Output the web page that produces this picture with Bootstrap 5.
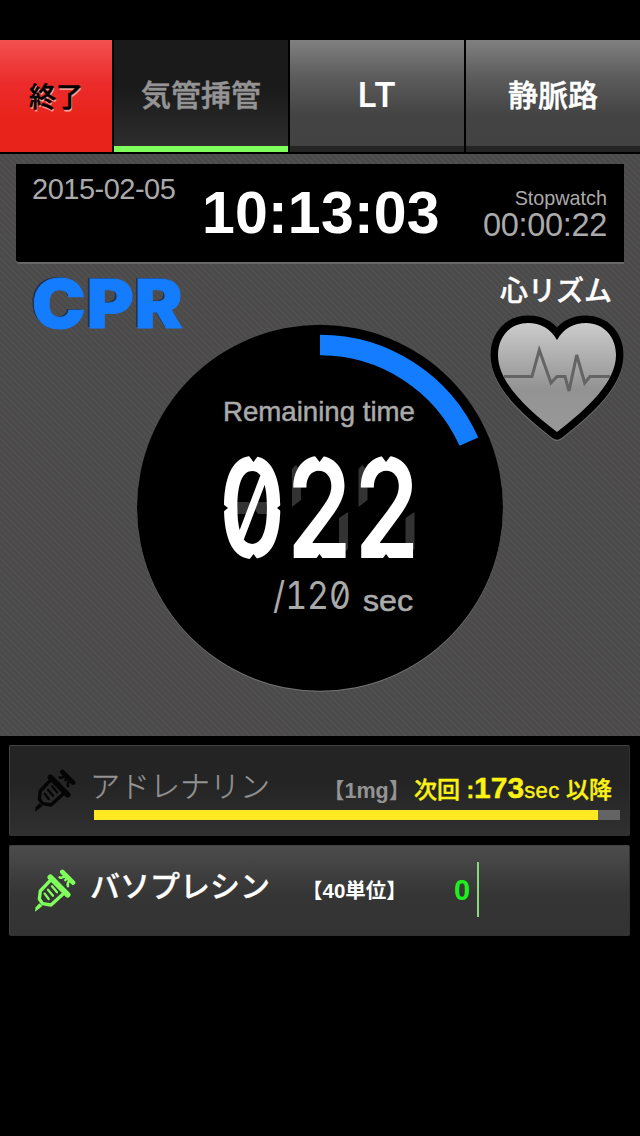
<!DOCTYPE html>
<html lang="ja">
<head>
<meta charset="utf-8">
<meta name="viewport" content="width=device-width, initial-scale=1">
<title>CPR</title>
<link href="https://cdn.jsdelivr.net/npm/bootstrap@5.3.0/dist/css/bootstrap.min.css" rel="stylesheet">
<style>
body{background:#000;color:#fff;width:640px;height:1136px;overflow:hidden;font-family:"Liberation Sans","Noto Sans CJK JP",sans-serif;line-height:1}
.topnav{margin-top:40px;height:114px;gap:2px;padding-bottom:2px}
.tab{border:0;border-radius:0;padding:0 0 1px;color:#fff;font:500 30px/1 "Noto Sans CJK JP",sans-serif;-webkit-text-stroke:.5px;width:174px;height:112px;background:linear-gradient(#808080,#5c5c5c 35%,#444 70%,#424242);border-bottom:6px solid #242424}
.tab-end{width:112px;border:0;color:#000;font-size:27px;background:linear-gradient(#f25050,#ec2c2c 38%,#e8231b 70%);text-shadow:1px 2px 0 #f9a09c}
.tab-on{color:#949494;background:linear-gradient(#1a1a1a 45%,#2d2d2d);border-bottom-color:#80ff5c}
.tab-latin{font:600 34px/1 Inter,sans-serif;-webkit-text-stroke:0;padding-top:5px}
.stage{height:582px;padding:10px 16px 0;background:repeating-linear-gradient(45deg,#4b4a4a 0 1.8px,#535151 3.2px,#4b4a4a 4.24px)}
.clock{height:100px;background:#000;border-bottom:2px solid #686868;border-bottom-left-radius:4px;color:#aaa;padding:0 17px 0 16px}
.date{font-size:29px;width:170px;padding-top:11px;letter-spacing:-.5px}
.now{font:700 59px/1 "Liberation Sans",sans-serif;color:#fff;padding-top:20px;letter-spacing:.2px}
.watch{padding-top:25px;font-size:19.8px;margin-left:auto}
.watch-n{font-size:32.5px;line-height:32px;letter-spacing:-.3px}
.cpr{font:900 68px/1 Inter,sans-serif;color:#147dff;text-shadow:-2px -1px 0 #233248;left:16px;top:5px;letter-spacing:1px;transform:scaleX(1.055);transform-origin:0 0;-webkit-text-stroke:1px #147dff}
.rhythm{right:0;top:6px;width:136px;text-align:center;font:500 28px/38px "Noto Sans CJK JP",sans-serif;-webkit-text-stroke:.4px}
.rhythm svg{display:block;margin-top:5px}
.dial{width:368px;height:368px;margin:60px auto 0}
.drug{width:621px;height:91px;margin:9px 0 0 9px;border:1px solid #424242;border-bottom-color:#303030;border-right-color:#303030;background:linear-gradient(#242424 40%,#303030);border-radius:2px;padding-left:24px}
.drug-live{background:linear-gradient(#4c4c4c,#353535 55%,#333)}
.drug svg{margin-top:22px;flex:none}
.drug-name{font:300 30px/40px "Noto Sans CJK JP",sans-serif;color:#949494;width:233px;margin-left:14px;padding-top:18px;-webkit-text-stroke:.3px}
.drug-live .drug-name{font-weight:500;color:#fff;width:212px}
.dose{font:700 21.5px/40px "Liberation Sans","Noto Sans CJK JP",sans-serif;color:#949494;padding-top:25px;width:84px}
.drug-live .dose{color:#fff;font-size:20.5px;width:106px}
.next{color:#fcf214;font:500 23px/40px "Liberation Sans","Noto Sans CJK JP",sans-serif;padding-top:22px;margin-left:7px;-webkit-text-stroke:.4px}
.next b{font-size:30px}
.next small{font-size:22px;letter-spacing:.4px}
.bar{left:84px;top:64px;width:526px;height:10px;background:#646464}
.bar div{height:10px;background:#ffe922}
.count{font:700 29px/40px "Liberation Sans",sans-serif;color:#1df01d;border-right:2px solid #88d97c;height:55px;margin-top:16px;padding-top:8px;margin-left:46px;width:25px}
</style>
<script src="https://cdn.jsdelivr.net/npm/bootstrap@5.3.0/dist/js/bootstrap.bundle.min.js"></script>
</head>
<body>
<nav class="topnav d-flex">
  <button class="tab tab-end">終了</button><button class="tab tab-on">気管挿管</button><button class="tab tab-latin">LT</button><button class="tab">静脈路</button>
</nav>
<main class="stage">
  <div class="clock d-flex text-nowrap">
    <div class="date">2015-02-05</div><div class="now">10:13:03</div>
    <div class="watch text-end"><div>Stopwatch</div><div class="watch-n">00:00:22</div></div>
  </div>
  <div class="position-relative">
    <div class="cpr position-absolute">CPR</div>
    <div class="rhythm position-absolute"><div>心リズム</div>
      <svg width="136" height="132" viewBox="488 313 136 132">
        <defs><linearGradient id="hg" x1="0" y1="0" x2="0" y2="1"><stop offset="0" stop-color="#ccc"/><stop offset=".6" stop-color="#939393"/><stop offset="1" stop-color="#989898"/></linearGradient></defs>
        <path d="M557 340C550 328 540 323 528 323C510 323 498 337 498 355C498 382 526 408 557 432C588 408 616 382 616 355C616 337 604 323 586 323C574 323 564 328 557 340Z" fill="#707070" stroke="#707070" stroke-width="15" stroke-linejoin="round" transform="translate(0 1.2)"/>
        <path d="M557 340C550 328 540 323 528 323C510 323 498 337 498 355C498 382 526 408 557 432C588 408 616 382 616 355C616 337 604 323 586 323C574 323 564 328 557 340Z" fill="url(#hg)" stroke="#000" stroke-width="15" stroke-linejoin="round" paint-order="stroke"/>
        <path d="M504 376.5H532L539.3 350L551 383L557 376.5H565L569 391L576.7 355L584.7 383L590 376.5H610" fill="none" stroke="#646464" stroke-width="3"/>
      </svg>
    </div>
  </div>
  <div class="dial">
    <svg width="368" height="368" viewBox="136 324 368 368">
      <circle cx="320" cy="508.7" r="183" fill="#777"/><circle cx="320" cy="507.7" r="183" fill="#000"/>
      <path d="M320 345A163 163 0 0 1 468.9 441.7" fill="none" stroke="#147dff" stroke-width="20.5"/>
      <g fill="#333"><path d="M231 508l6-6h12l4 6-4 6h-12zM254 508l4-6h12l6 6-6 6h-12z"/><path id="seg" d="M292 469l4-4 5 6v29l-9 7zM339 518l9-6v37l-5 4-4-6z"/><use href="#seg" x="66.500"/></g>
      <text x="223" y="421" textLength="192" lengthAdjust="spacingAndGlyphs" font-family="Liberation Sans" font-size="28" fill="#aaa" stroke="#aaa" stroke-width=".5">Remaining time</text>
      <text x="218.500" y="557.500" textLength="202" lengthAdjust="spacingAndGlyphs" font-family="Inter" font-weight="600" font-size="138" fill="#fff" style="font-feature-settings:'zero','tnum'">022</text>
      <path id="gap" d="M249 456h9l-4.500 6zM249 560h9l-4.500-6z" fill="#000"/><use href="#gap" x="66"/><use href="#gap" x="132.500"/>
      <path d="M223 504l5 4-5 4zM282 504l-5 4 5 4z" fill="#000"/>
      <text x="273" y="609" textLength="78" lengthAdjust="spacingAndGlyphs" font-family="Inter" font-size="38" font-weight="400" fill="#aaa" style="font-feature-settings:'zero','tnum'">/120</text>
      <text x="363" y="610.500" textLength="50" lengthAdjust="spacingAndGlyphs" font-family="Liberation Sans" font-size="30" fill="#aaa" stroke="#aaa" stroke-width=".6">sec</text>
    </svg>
  </div>
</main>
<svg width="0" height="0" class="position-absolute">
  <symbol id="syringe" viewBox="42 39 126 132"><g fill="none" stroke="currentColor" stroke-linecap="round" stroke-linejoin="round">
    <path d="M45 170L47 157L58 145L67 153L57 161Z" fill="currentColor" stroke="none"/>
    <path d="M93 74L61 108L58 132L68 146L93 150L130 116" stroke-width="10"/>
    <path d="M91 67L143 119" stroke-width="17"/><path d="M127 51L159 83" stroke-width="14"/>
    <path d="M142 68L136 75M119 67Q127 71 138 61M144 93Q140 84 151 75" stroke-width="8"/>
    <path d="M96 94L111 112M84 104L99 122M74 116L86 132" stroke-width="7"/>
  </g></symbol>
</svg>
<section>
  <div class="drug d-flex position-relative text-nowrap">
    <svg width="42" height="44" color="#050505"><use href="#syringe"/></svg>
    <div class="drug-name">アドレナリン</div><div class="dose">【1mg】</div>
    <div class="next">次回 <b style="font-size:23px">:</b><b>173</b><small>sec</small> 以降</div>
    <div class="bar position-absolute"><div style="width:95.8%"></div></div>
  </div>
  <div class="drug drug-live d-flex text-nowrap">
    <svg width="42" height="44" color="#80ff5c"><use href="#syringe"/></svg>
    <div class="drug-name">バソプレシン</div><div class="dose">【40単位】</div>
    <div class="count">0</div>
  </div>
</section>
</body>
</html>
